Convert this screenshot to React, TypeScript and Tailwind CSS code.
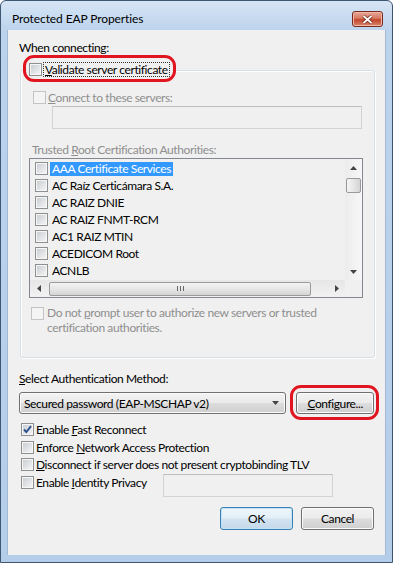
import React from 'react';

type BoxProps = { checked?: boolean; disabled?: boolean };

const Box: React.FC<BoxProps> = ({ checked, disabled }) => (
  <span
    className={`flex h-[13px] w-[13px] shrink-0 items-center justify-center border ${
      disabled
        ? 'border-[#c4c4c4] bg-[#f4f4f4]'
        : 'border-[#8e8f8f] bg-[linear-gradient(135deg,#c6cbd1,#f7f7f7)] shadow-[inset_0_0_0_1px_#f6f6f6]'
    }`}
  >
    {checked && (
      <svg width="11" height="11" viewBox="0 0 11 11">
        <path d="M2 5.5 L4.3 8 L9 2.2" fill="none" stroke="#2c4f8e" strokeWidth="1.9" />
      </svg>
    )}
  </span>
);

const Arrow: React.FC<{ dir: 'up' | 'down' | 'left' | 'right' }> = ({ dir }) => {
  const pts = {
    up: '0,4 3.5,0 7,4',
    down: '0,0 7,0 3.5,4',
    left: '4,0 4,7 0,3.5',
    right: '0,0 4,3.5 0,7',
  }[dir];
  const vertical = dir === 'up' || dir === 'down';
  return (
    <svg width={vertical ? 7 : 4} height={vertical ? 4 : 7} viewBox={vertical ? '0 0 7 4' : '0 0 4 7'}>
      <polygon points={pts} fill="#444" />
    </svg>
  );
};

const btnGrad =
  'bg-[linear-gradient(180deg,#f2f2f2_0%,#ebebeb_48%,#dddddd_52%,#cfcfcf_100%)] border border-[#707070] rounded-[3px] shadow-[inset_0_0_0_1px_#fbfbfb]';

const certs = [
  'AAA Certificate Services',
  'AC Raíz Certicámara S.A.',
  'AC RAIZ DNIE',
  'AC RAIZ FNMT-RCM',
  'AC1 RAIZ MTIN',
  'ACEDICOM Root',
  'ACNLB',
];

export default function App() {
  return (
    <div className="flex h-[563px] w-[393px] flex-col overflow-hidden rounded-t-[6px] border border-[#3f5673] bg-[linear-gradient(180deg,#d6e5f5_0px,#bcd3ec_30px,#b4cde9_100%)] font-['Lato',sans-serif] text-[12px] leading-[15px] text-black">
      {/* Title bar */}
      <div className="flex h-[29px] shrink-0 items-start">
        <span className="ml-[11px] mt-[10px] tracking-[-0.1px]">Protected EAP Properties</span>
        <div className="ml-auto mr-[9px] mt-[10px] flex h-[16px] w-[31px] items-center justify-center rounded-[3px] border border-[#7a2a1c] bg-[linear-gradient(180deg,#e9a898_0%,#d7785f_45%,#c3452b_55%,#d9866c_100%)] shadow-[inset_0_0_0_1px_#efb7a8]">
          <svg width="11" height="9" viewBox="0 0 11 9">
            <path d="M1.5 1 L9.5 8 M9.5 1 L1.5 8" stroke="#5a1d12" strokeWidth="3.2" />
            <path d="M1.5 1 L9.5 8 M9.5 1 L1.5 8" stroke="#ffffff" strokeWidth="1.8" />
          </svg>
        </div>
      </div>

      <div className="flex flex-1">
        <div className="w-[7px] border-r border-[#a3b9d3]" />
        {/* Client area */}
        <div className="flex h-[525px] w-[377px] flex-col bg-[#f0f0f0] pl-[11px] pr-[11px] pt-[10px] tracking-[-0.4px]">
          <div>When connecting:</div>

          {/* Group box */}
          <div className="ml-[1px] mt-[15px] flex w-[355px] flex-col rounded-[3px] border border-[#d5dfe5] pb-[22px] shadow-[inset_1px_1px_0_#ffffff,1px_1px_0_#ffffff]">
            <div className="relative -mt-[9px] ml-[6px] flex h-[15px] w-fit items-center gap-[1px] bg-[#f0f0f0] px-[2px]">
              <Box />
              <span className="border border-dotted border-[#333] px-[1px] leading-[13px]">
                <u>V</u>alidate server certificate
              </span>
              <div className="absolute -left-[4px] -top-[7px] h-[27px] w-[153px] rounded-[11px] border-[3px] border-[#e0151f]" />
            </div>

            <div className="mt-[13px] flex h-[15px] items-center gap-[2px] pl-[12px] text-[#8f8f8f]">
              <Box disabled />
              <span>
                <u>C</u>onnect to these servers:
              </span>
            </div>
            <div className="ml-[31px] mt-[1px] h-[23px] w-[310px] border border-[#d3d3d3] border-t-[#bdbdbd] bg-[#f0f0f0]" />

            <div className="ml-[11px] mt-[13px] text-[#8f8f8f]">
              Trusted <u>R</u>oot Certification Authorities:
            </div>

            {/* List box */}
            <div className="ml-[8px] mt-[1px] flex h-[140px] w-[334px] border border-[#828790] bg-[#f0f0f0]">
              <div className="flex w-[315px] flex-col">
                <div className="flex flex-1 flex-col pt-[1px]">
                  {certs.map((c, i) => (
                    <div key={c} className="flex h-[17px] items-center pl-[5px]">
                      <Box />
                      <span
                        className={`ml-[2px] px-[2px] leading-[14px] ${
                          i === 0 ? 'bg-[#3399ff] text-white' : ''
                        }`}
                      >
                        {c}
                      </span>
                    </div>
                  ))}
                </div>
                {/* Horizontal scrollbar */}
                <div className="flex h-[17px] items-center bg-[linear-gradient(180deg,#e6e6e6,#f2f2f2)]">
                  <div className="flex h-[17px] w-[17px] items-center justify-center">
                    <Arrow dir="left" />
                  </div>
                  <div className="flex h-[17px] flex-1 items-center">
                    <div className="ml-[2px] flex h-[14px] w-[262px] items-center justify-center gap-[2px] rounded-[2px] border border-[#9a9a9a] bg-[linear-gradient(180deg,#f4f4f4,#e6e6e6_50%,#d4d4d4)]">
                      <span className="h-[5px] w-[1px] bg-[#666]" />
                      <span className="h-[5px] w-[1px] bg-[#666]" />
                      <span className="h-[5px] w-[1px] bg-[#666]" />
                    </div>
                  </div>
                  <div className="flex h-[17px] w-[17px] items-center justify-center">
                    <Arrow dir="right" />
                  </div>
                </div>
              </div>
              {/* Vertical scrollbar */}
              <div className="flex w-[17px] flex-col">
                <div className="flex flex-1 flex-col bg-[linear-gradient(90deg,#ececec,#f7f7f7)]">
                  <div className="flex h-[17px] items-center justify-center">
                    <Arrow dir="up" />
                  </div>
                  <div className="flex-1">
                    <div className="mx-auto mt-[2px] h-[15px] w-[15px] rounded-[2px] border border-[#9a9a9a] bg-[linear-gradient(90deg,#f4f4f4,#e6e6e6_50%,#d4d4d4)]" />
                  </div>
                  <div className="flex h-[17px] items-center justify-center">
                    <Arrow dir="down" />
                  </div>
                </div>
                <div className="h-[17px] bg-[#f0f0f0]" />
              </div>
            </div>

            <div className="mt-[7px] flex items-start pl-[10px] text-[#8f8f8f]">
              <span className="mt-[2px]">
                <Box disabled />
              </span>
              <span className="ml-[3px] whitespace-nowrap">
                Do not <u>p</u>rompt user to authorize new servers or trusted
                <br />
                certification authorities.
              </span>
            </div>
          </div>

          <div className="mt-[13px]">
            <u>S</u>elect Authentication Method:
          </div>

          <div className="mt-[6px] flex h-[22px]">
            <div className={`flex h-[22px] w-[268px] items-center pl-[4px] pr-[6px] ${btnGrad}`}>
              <span className="flex-1">Secured password (EAP-MSCHAP v2)</span>
              <Arrow dir="down" />
            </div>
            <div className={`relative ml-[10px] flex h-[22px] w-[78px] items-center justify-center ${btnGrad}`}>
              <span>
                <u>C</u>onfigure...
              </span>
              <div className="absolute -left-[7px] -top-[8px] h-[35px] w-[89px] rounded-[11px] border-[3px] border-[#e0151f]" />
            </div>
          </div>

          <div className="mt-[8px] flex h-[15px] items-center gap-[2px] pl-[2px]">
            <Box checked />
            <span>
              Enable <u>F</u>ast Reconnect
            </span>
          </div>
          <div className="mt-[3px] flex h-[15px] items-center gap-[2px] pl-[2px]">
            <Box />
            <span>
              Enforce <u>N</u>etwork Access Protection
            </span>
          </div>
          <div className="mt-[2px] flex h-[15px] items-center gap-[2px] pl-[2px]">
            <Box />
            <span>
              <u>D</u>isconnect if server does not present cryptobinding TLV
            </span>
          </div>
          <div className="mt-[2px] flex items-start pl-[2px]">
            <div className="mt-[1px] flex h-[15px] w-[142px] items-center gap-[2px]">
              <Box />
              <span>
                Enable <u>I</u>dentity Privacy
              </span>
            </div>
            <div className="h-[23px] w-[170px] border border-[#d3d3d3] border-t-[#bdbdbd] bg-[#f0f0f0]" />
          </div>

          <div className="mt-[10px] flex justify-end gap-[8px]">
            <div className="flex h-[23px] w-[73px] items-center justify-center rounded-[3px] border border-[#3c7fb1] bg-[linear-gradient(180deg,#eef6fc_0%,#e3eef7_48%,#d2e3f1_52%,#c4d9ea_100%)] shadow-[inset_0_0_0_1px_#bfe3f8]">
              OK
            </div>
            <div className={`flex h-[23px] w-[73px] items-center justify-center ${btnGrad}`}>Cancel</div>
          </div>
        </div>
        <div className="w-[7px] border-l border-[#a3b9d3]" />
      </div>
      <div className="h-[7px] shrink-0" />
    </div>
  );
}
